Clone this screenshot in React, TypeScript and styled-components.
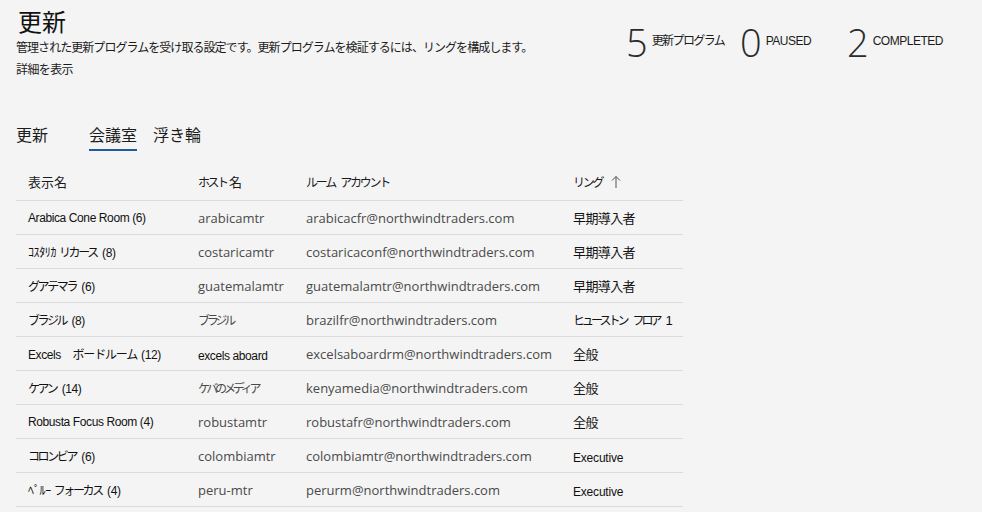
import React from 'react';
import styled, { createGlobalStyle } from 'styled-components';

const GlobalStyle = createGlobalStyle`
  html, body {
    margin: 0;
    padding: 0;
    background: #f4f4f4;
    font-family: 'Noto Sans CJK JP', 'Liberation Sans', sans-serif;
    color: #1b1b1b;
  }
`;

const Page = styled.div`
  width: 982px;
  height: 512px;
  overflow: hidden;
  box-sizing: border-box;
  padding: 4px 0 0 16px;
  white-space: nowrap;
`;

const Header = styled.div`
  display: flex;
  justify-content: space-between;
  align-items: flex-start;
`;

const Intro = styled.div`
  display: flex;
  flex-direction: column;
`;

const Title = styled.h1`
  margin: 0 0 0 2px;
  font-size: 24px;
  font-weight: 400;
  line-height: 34px;
  color: #111;
`;

const Description = styled.p`
  margin: 1px 0 0;
  font-size: 12px;
  line-height: 16px;
  letter-spacing: -0.95px;
`;

const MoreLink = styled.span`
  margin-top: 6px;
  font-size: 12px;
  line-height: 16px;
  letter-spacing: -0.6px;
`;

const Stats = styled.div`
  display: flex;
  align-items: center;
  gap: 16px;
  margin: 18px 37px 0 0;
`;

const Stat = styled.div<{ $width: number }>`
  display: flex;
  align-items: center;
  gap: 4px;
  width: ${({ $width }) => $width}px;
`;

const StatNumber = styled.span`
  font-family: 'Open Sans', 'Liberation Sans', sans-serif;
  font-size: 38px;
  font-weight: 300;
  line-height: 40px;
  color: #2b2b2b;
`;

const StatLabel = styled.span<{ $cjk?: boolean }>`
  font-family: 'Liberation Sans', 'Noto Sans CJK JP', sans-serif;
  font-size: 12px;
  margin-top: ${({ $cjk }) => ($cjk ? '-6px' : '-2px')};
  letter-spacing: ${({ $cjk }) => ($cjk ? '-1.6px' : '-0.5px')};
`;

const Tabs = styled.div`
  display: flex;
  gap: 16px;
  margin-top: 47px;
`;

const Tab = styled.div<{ $active?: boolean }>`
  font-size: 16px;
  line-height: 21px;
  padding-bottom: 4px;
  border-bottom: 2px solid ${({ $active }) => ($active ? '#1d5a9e' : 'transparent')};
  color: #1b1b1b;
`;

const FirstTab = styled(Tab)`
  margin-right: 25px;
`;

const Table = styled.div`
  width: 667px;
  margin-top: 12px;
`;

const Row = styled.div<{ $header?: boolean }>`
  display: grid;
  grid-template-columns: 170px 108px 267px 1fr;
  align-items: center;
  height: ${({ $header }) => ($header ? '37px' : '33px')};
  padding-left: 12px;
  border-bottom: 1px solid #dcdcdc;
`;

const HeadCell = styled.div`
  font-size: 13px;
  color: #1b1b1b;
  display: flex;
  align-items: center;
  gap: 6px;
`;

const NameCell = styled.div`
  font-family: 'Liberation Sans', 'Noto Sans CJK JP', sans-serif;
  font-size: 12px;
  color: #111;
  letter-spacing: -0.4px;
`;

const TextCell = styled.div<{ $tight?: boolean }>`
  font-family: 'Open Sans', 'Noto Sans CJK JP', sans-serif;
  font-size: 13px;
  color: #4a4a4a;
`;

const TightCell = styled.div`
  font-family: 'Liberation Sans', 'Noto Sans CJK JP', sans-serif;
  font-size: 12px;
  color: #111;
  letter-spacing: -0.4px;
  padding-top: 4px;
`;

const RingCell = styled.div<{ $small?: boolean }>`
  font-family: 'Liberation Sans', 'Noto Sans CJK JP', sans-serif;
  font-size: ${({ $small }) => ($small ? '12px' : '13px')};
  letter-spacing: ${({ $small }) => ($small ? '-0.2px' : '-0.6px')};
  color: #111;
  padding-top: ${({ $small }) => ($small ? '4px' : '0')};
`;

// kana is drawn condensed in the original UI font
const Kana = styled.span<{ $squeeze: number }>`
  font-size: 12px;
  letter-spacing: ${({ $squeeze }) => -$squeeze}px;
  padding-right: ${({ $squeeze }) => $squeeze}px;
`;

const Condensed = ({ text, squeeze }: { text: string; squeeze: number }) => (
  <>
    {text.split(/([\u3040-\u30ff]+)/).map((part, i) =>
      i % 2 === 1 ? (
        <Kana key={i} $squeeze={squeeze}>
          {part}
        </Kana>
      ) : (
        part
      )
    )}
  </>
);

const SortArrow = () => (
  <svg width="10" height="14" viewBox="0 0 10 14">
    <path d="M5 13V1.5M1 5.5L5 1.5L9 5.5" fill="none" stroke="#5a4f55" strokeWidth="1" />
  </svg>
);

type Room = {
  name: string;
  host: string;
  account: string;
  ring: string;
  tightHost?: boolean;
};

const rooms: Room[] = [
  { name: 'Arabica Cone Room (6)', host: 'arabicamtr', account: 'arabicacfr@northwindtraders.com', ring: '早期導入者' },
  { name: 'ｺｽﾀﾘｶ リカース (8)', host: 'costaricamtr', account: 'costaricaconf@northwindtraders.com', ring: '早期導入者' },
  { name: 'グアテマラ (6)', host: 'guatemalamtr', account: 'guatemalamtr@northwindtraders.com', ring: '早期導入者' },
  { name: 'ブラジル (8)', host: 'ブラジル', account: 'brazilfr@northwindtraders.com', ring: 'ヒューストン フロア 1' },
  { name: 'Excels　ボードルーム (12)', host: 'excels aboard', account: 'excelsaboardrm@northwindtraders.com', ring: '全般', tightHost: true },
  { name: 'ケアン (14)', host: 'ケバのメディア', account: 'kenyamedia@northwindtraders.com', ring: '全般' },
  { name: 'Robusta Focus Room (4)', host: 'robustamtr', account: 'robustafr@northwindtraders.com', ring: '全般' },
  { name: 'コロンビア (6)', host: 'colombiamtr', account: 'colombiamtr@northwindtraders.com', ring: 'Executive' },
  { name: 'ﾍﾟﾙｰ フォーカス (4)', host: 'peru-mtr', account: 'perurm@northwindtraders.com', ring: 'Executive' },
];

export default function App() {
  return (
    <>
      <GlobalStyle />
      <Page>
        <Header>
          <Intro>
            <Title>更新</Title>
            <Description>
              管理された更新プログラムを受け取る設定です。更新プログラムを検証するには、リングを構成します。
            </Description>
            <MoreLink>詳細を表示</MoreLink>
          </Intro>
          <Stats>
            <Stat $width={98}>
              <StatNumber>5</StatNumber>
              <StatLabel $cjk>更新プログラム</StatLabel>
            </Stat>
            <Stat $width={91}>
              <StatNumber>0</StatNumber>
              <StatLabel>PAUSED</StatLabel>
            </Stat>
            <Stat $width={98}>
              <StatNumber>2</StatNumber>
              <StatLabel>COMPLETED</StatLabel>
            </Stat>
          </Stats>
        </Header>

        <Tabs>
          <FirstTab>更新</FirstTab>
          <Tab $active>会議室</Tab>
          <Tab>浮き輪</Tab>
        </Tabs>

        <Table>
          <Row $header>
            <HeadCell>表示名</HeadCell>
            <HeadCell>
              <span>
                <Condensed text="ホスト名" squeeze={2.5} />
              </span>
            </HeadCell>
            <HeadCell>
              <span>
                <Condensed text="ルーム アカウント" squeeze={2.2} />
              </span>
            </HeadCell>
            <HeadCell>
              <span>
                <Condensed text="リング" squeeze={2.2} />
              </span>
              <SortArrow />
            </HeadCell>
          </Row>
          {rooms.map((room) => (
            <Row key={room.account}>
              <NameCell>
                <Condensed text={room.name} squeeze={room.tightHost ? 1.2 : 2.4} />
              </NameCell>
              {room.tightHost ? (
                <TightCell>{room.host}</TightCell>
              ) : (
                <TextCell>
                  <Condensed text={room.host} squeeze={3.2} />
                </TextCell>
              )}
              <TextCell>{room.account}</TextCell>
              <RingCell $small={room.ring === 'Executive'}>
                <Condensed text={room.ring} squeeze={3} />
              </RingCell>
            </Row>
          ))}
        </Table>
      </Page>
    </>
  );
}
